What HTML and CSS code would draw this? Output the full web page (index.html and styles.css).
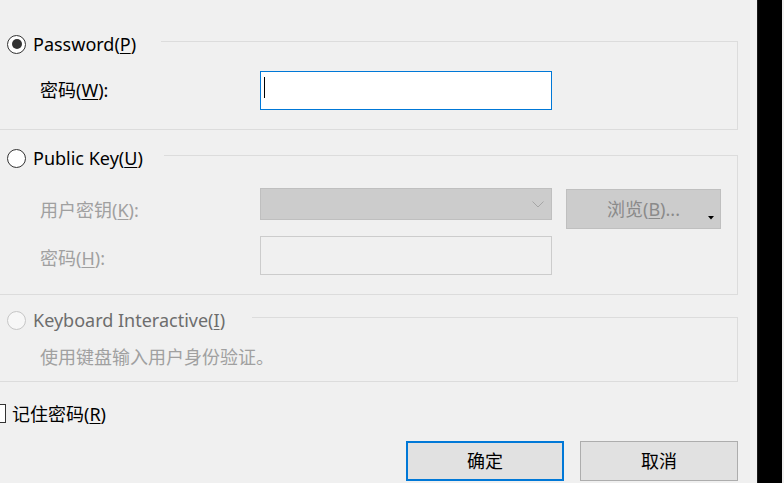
FILE: index.html
```html
<!DOCTYPE html>
<html lang="zh-CN">
<head>
<meta charset="utf-8">
<title>认证</title>
<link rel="stylesheet" href="styles.css">
</head>
<body>
<div class="screen">
  <main class="dialog">
    <fieldset class="group group-password">
      <legend class="legend legend-password">
        <span class="radio radio-checked"></span>
        <span class="legend-text">Password(<u>P</u>)</span>
      </legend>
      <div class="row row-first">
        <label class="lbl lbl-first">密码(<u>W</u>):</label>
        <div class="input input-focus"><span class="caret"></span></div>
      </div>
    </fieldset>

    <fieldset class="group group-key">
      <legend class="legend legend-key">
        <span class="radio"></span>
        <span class="legend-text">Public Key(<u>U</u>)</span>
      </legend>
      <div class="row row-key">
        <label class="lbl lbl-disabled">用户密钥(<u>K</u>):</label>
        <div class="combo">
          <svg class="chevron" width="12" height="7" viewBox="0 0 12 7"><path d="M0.5 0.5 L6 6 L11.5 0.5" fill="none" stroke="#a6a6a6" stroke-width="1"/></svg>
        </div>
        <div class="browse">
          <span>浏览(<u>B</u>)...</span>
          <svg class="split" width="6" height="4" viewBox="0 0 6 4"><polygon points="0,0 6,0 3,3.5" fill="#000"/></svg>
        </div>
      </div>
      <div class="row row-pass">
        <label class="lbl lbl-disabled">密码(<u>H</u>):</label>
        <div class="input input-disabled"></div>
      </div>
    </fieldset>

    <fieldset class="group group-kbd">
      <legend class="legend legend-kbd">
        <span class="radio radio-disabled"></span>
        <span class="legend-text legend-text-disabled">Keyboard Interactive(<u>I</u>)</span>
      </legend>
      <p class="desc">使用键盘输入用户身份验证。</p>
    </fieldset>

    <div class="remember">
      <span class="checkbox"></span>
      <span class="remember-text">记住密码(<u>R</u>)</span>
    </div>

    <div class="actions">
      <button class="btn btn-primary">确定</button>
      <button class="btn">取消</button>
    </div>
  </main>
  <div class="strip"></div>
  <div class="edge"></div>
</div>
</body>
</html>
```

FILE: styles.css
```css
* { box-sizing: border-box; }

html, body {
  margin: 0;
  padding: 0;
  background: #f0f0f0;
  overflow: hidden;
}

body {
  font-family: "Noto Sans", "Noto Sans CJK SC", sans-serif;
  font-size: 18px;
  color: #000;
}

u { text-decoration-thickness: 1px; text-underline-offset: 2px; }

.screen {
  display: flex;
  width: 784px;
  height: 483px;
}

.dialog {
  width: 757px;
  flex: none;
  padding-top: 28px;
}

.strip {
  width: 25px;
  flex: none;
  background: #000;
  border-left: 1px solid #1a1a1a;
}

.edge {
  width: 2px;
  flex: none;
  background: #f0f0f0;
}

/* group boxes */
.group {
  margin: 0 0 0 -4px;
  width: 742px;
  border: 1px solid #dcdcdc;
  padding: 0;
  min-width: 0;
}

.group-password { padding: 17px 0 19px; }
.group-key { margin-top: 12px; padding: 20px 0 19px; }
.group-kbd { margin-top: 9px; padding: 15px 0 12px; }

.legend {
  display: flex;
  align-items: center;
  gap: 7px;
  padding: 6px 0 0 10px;
  height: 26px;
  line-height: 20px;
}

.legend-password { width: 164px; }
.legend-key { width: 167px; }
.legend-kbd { width: 255px; }

.legend-text { white-space: nowrap; }
.legend-text-disabled { color: #6d6d6d; }

.radio {
  width: 19px;
  height: 19px;
  flex: none;
  border: 1px solid #333;
  border-radius: 50%;
  background: #fff;
  display: flex;
  align-items: center;
  justify-content: center;
}

.radio-checked::after {
  content: "";
  width: 10px;
  height: 10px;
  border-radius: 50%;
  background: #333;
}

.radio-disabled { border-color: #c6c6c6; background: #f7f7f7; }

/* rows */
.row {
  display: flex;
  align-items: flex-start;
}

.row-pass { margin-top: 7px; }

.lbl {
  width: 220px;
  margin-left: 43px;
  flex: none;
  line-height: 24px;
  white-space: nowrap;
}

.lbl-first { margin-top: 7px; }
.row-key .lbl { margin-top: 10px; }
.row-pass .lbl { margin-top: 10px; }

.lbl-disabled { color: #a0a0a0; }

.input {
  width: 292px;
  height: 39px;
  flex: none;
  border: 1px solid #cccccc;
  background: #fff;
  display: flex;
  align-items: flex-start;
}

.input-focus { border-color: #0078d7; }

.caret {
  width: 1px;
  height: 21px;
  margin: 5px 0 0 3px;
  background: #000;
}

.input-disabled {
  background: #f0f0f0;
  border-color: #cccccc;
}

.combo {
  width: 292px;
  height: 32px;
  flex: none;
  border: 1px solid #bfbfbf;
  background: #cccccc;
  display: flex;
  align-items: center;
  justify-content: flex-end;
  padding-right: 7px;
}

.browse {
  position: relative;
  width: 155px;
  height: 40px;
  flex: none;
  margin: 1px 0 0 14px;
  border: 1px solid #bfbfbf;
  background: #cccccc;
  color: #8a8a8a;
  display: flex;
  align-items: center;
  justify-content: center;
  line-height: 24px;
}

.split {
  position: absolute;
  right: 6px;
  bottom: 8px;
}

.desc {
  margin: 0 0 0 43px;
  line-height: 24px;
  color: #a0a0a0;
}

/* remember */
.remember {
  display: flex;
  align-items: center;
  gap: 6px;
  margin: 22px 0 0 -13px;
  height: 19px;
}

.checkbox {
  width: 19px;
  height: 19px;
  flex: none;
  border: 1px solid #333;
  background: #fff;
}

.remember-text { line-height: 24px; }

/* buttons */
.actions {
  display: flex;
  justify-content: flex-end;
  gap: 16px;
  margin-top: 18px;
  padding-right: 19px;
}

.btn {
  width: 158px;
  height: 40px;
  border: 1px solid #adadad;
  background: #e1e1e1;
  font: inherit;
  color: #000;
  padding: 0;
  line-height: 24px;
}

.btn-primary { border: 2px solid #0078d7; }
```
